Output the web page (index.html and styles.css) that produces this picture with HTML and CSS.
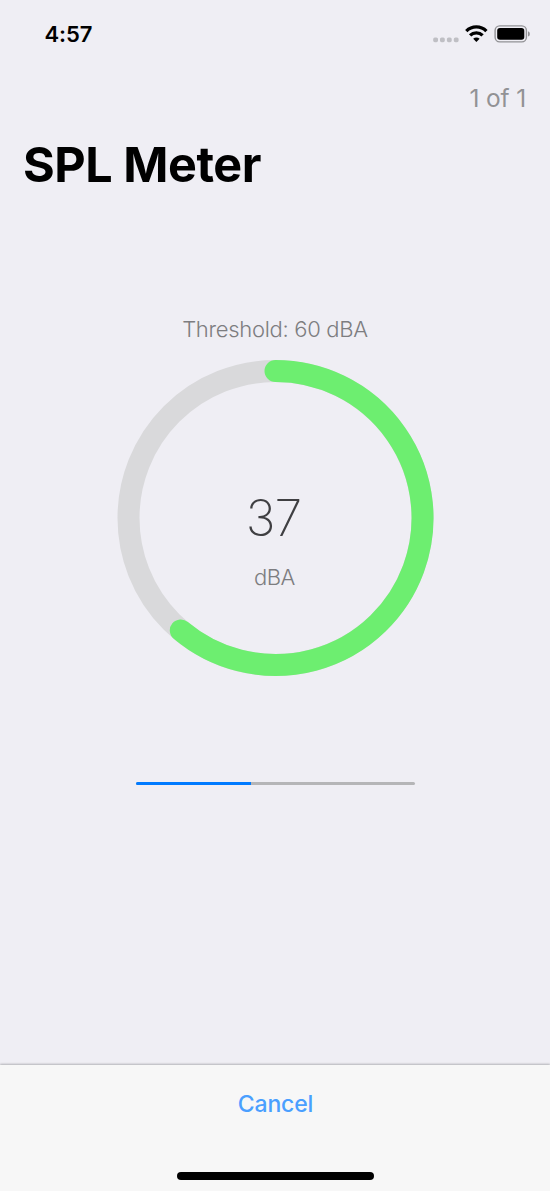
FILE: index.html
```html
<!DOCTYPE html>
<html lang="en">
<head>
<meta charset="utf-8">
<title>SPL Meter</title>
<link rel="stylesheet" href="styles.css">
</head>
<body>
<main class="screen">
  <header class="status">
    <span class="time">4:57</span>
    <svg class="status-icons" width="98" height="20" viewBox="433 24 98 20">
      <g fill="#bfbfc4"><rect x="433.2" y="37.4" width="4.8" height="4.8" rx="1.6"/><rect x="440" y="37.4" width="4.8" height="4.8" rx="1.6"/><rect x="446.9" y="37.4" width="4.8" height="4.8" rx="1.6"/><rect x="453.8" y="37.4" width="4.8" height="4.8" rx="1.6"/></g>
      <g fill="none" stroke="#000" stroke-width="3.3">
        <path d="M466.3 31.1a14.3 14.3 0 0 1 20.1 0"/>
        <path d="M470.1 35.4a8.9 8.9 0 0 1 12.5 0"/>
      </g>
      <path d="M476.4 42l-3.2-3.2a4.5 4.5 0 0 1 6.4 0z"/>
      <rect x="495.1" y="25.9" width="31.3" height="16" rx="4.6" fill="none" stroke="#929295" stroke-width="1.4"/>
      <rect x="497.2" y="28" width="27.1" height="11.8" rx="2.8"/>
      <path d="M528 31.2q1.9.7 1.9 2.7t-1.9 2.7z" fill="#929295"/>
    </svg>
  </header>
  <div class="counter">1 of 1</div>
  <h1 class="title">SPL Meter</h1>
  <section class="meter">
    <div class="threshold">Threshold: 60 dBA</div>
    <div class="gauge">
      <svg class="ring" width="316" height="316" viewBox="-157.5 -158 316 316" fill="none" stroke-width="22">
        <circle r="147" stroke="#d9d9db"/>
        <path d="M0-147A147 147 0 1 1-94.7 112.4" stroke="#6dee70" stroke-linecap="round"/>
      </svg>
      <div class="reading">
        <div class="value">37</div>
        <div class="unit">dBA</div>
      </div>
    </div>
    <div class="progress"><div class="progress-fill"></div></div>
  </section>
  <footer class="footer">
    <span class="cancel">Cancel</span>
    <span class="home"></span>
  </footer>
</main>
</body>
</html>
```
FILE: styles.css
```css
* { box-sizing: border-box; }
body { margin: 0; background: #efeef4; font-family: Inter, "Liberation Sans", sans-serif; }
.screen { display: flex; flex-direction: column; width: 550px; height: 1191px; overflow: hidden; }
.status { display: flex; justify-content: space-between; align-items: center; height: 68px; padding: 0 19px 0 44.5px; }
.time { font-size: 22px; font-weight: 600; line-height: 28px; letter-spacing: -0.1px; }
.status-icons { display: block; }
.counter { height: 60px; padding-right: 24px; text-align: right; font-size: 24.5px; line-height: 60px; letter-spacing: -0.15px; color: #929295; }
.title { margin: 0; padding-left: 23px; height: 74px; font-size: 48.5px; line-height: 74px; font-weight: 700; letter-spacing: -0.45px; }
.meter { display: flex; flex-direction: column; align-items: center; padding-top: 112px; }
.threshold { height: 30px; line-height: 30px; font-size: 22px; font-weight: 300; letter-spacing: -0.3px; color: #7d7d80; }
.gauge { display: grid; width: 316px; height: 316px; margin: 16px 0 0 1px; }
.ring, .reading { grid-area: 1 / 1; }
.ring { display: block; overflow: visible; }
.reading { text-align: center; padding-top: 128px; }
.value { height: 60px; line-height: 60px; padding-right: 4px; font-size: 50px; font-weight: 200; letter-spacing: -0.8px; color: #3f3f42; }
.unit { height: 30px; margin-top: 14px; line-height: 30px; font-size: 22px; font-weight: 300; letter-spacing: -0.5px; padding-right: 2px; color: #7d7d80; }
.progress { width: 279px; height: 3px; margin: 106px 0 0 1px; border-radius: 1.5px; overflow: hidden; background: #b5b5b7; }
.progress-fill { width: 114.5px; height: 3px; background: #007aff; }
.footer { display: flex; flex-direction: column; align-items: center; height: 126px; margin-top: auto; padding-top: 24px; background: #f7f7f7; box-shadow: 0 -1px 2px #b2b2b6; }
.cancel { padding-left: 1px; font-size: 23px; line-height: 30px; font-weight: 500; letter-spacing: -0.15px; color: #4a9fff; }
.home { width: 197px; height: 8px; margin-top: 53px; border-radius: 4px; background: #000; }
```
